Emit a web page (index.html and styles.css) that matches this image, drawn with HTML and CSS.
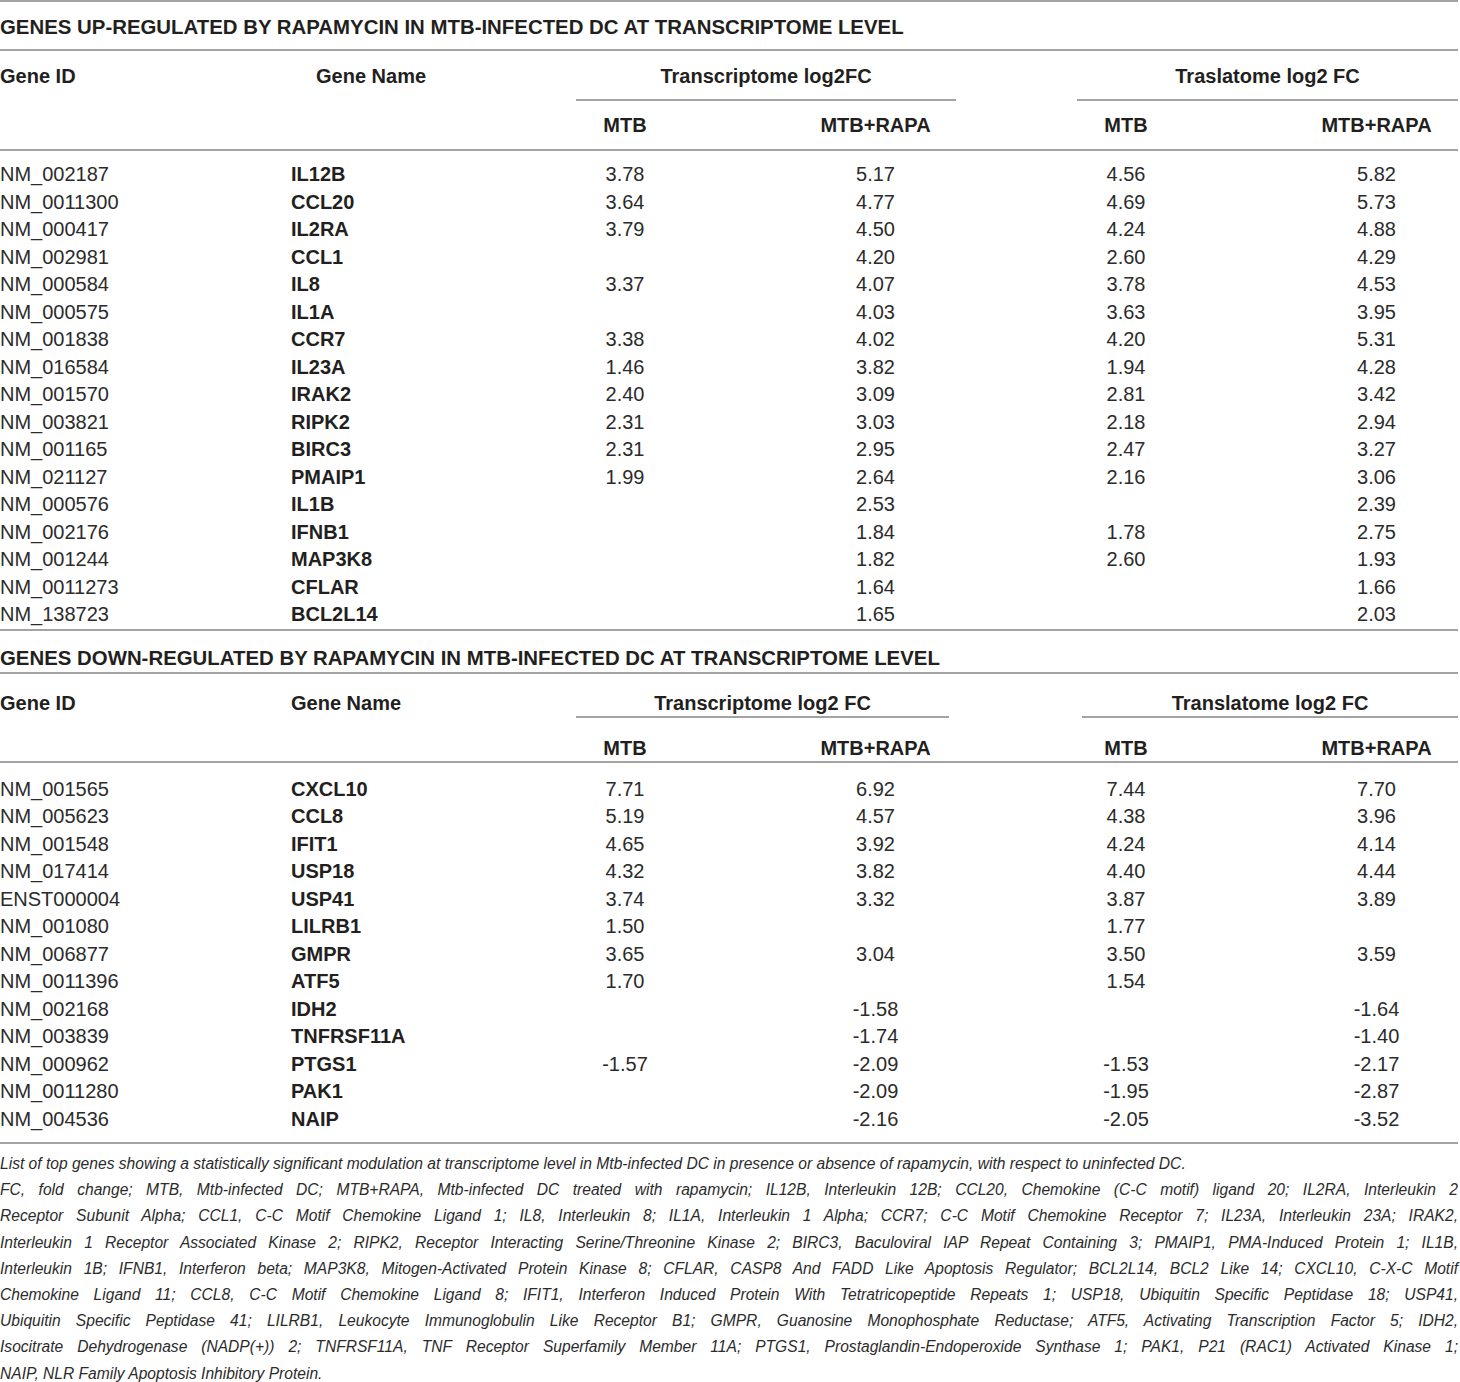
FILE: index.html
```html
<!DOCTYPE html>
<html>
<head>
<meta charset="utf-8">
<link rel="stylesheet" href="styles.css">
</head>
<body>
<div class="page">
  <section class="tbl t1">
    <div class="title">GENES UP-REGULATED BY RAPAMYCIN IN MTB-INFECTED DC AT TRANSCRIPTOME LEVEL</div>
    <div class="ghead g1">
      <div class="h">Gene ID</div>
      <div class="h gname1">Gene Name</div>
      <div class="h grp">Transcriptome log2FC</div>
      <div></div>
      <div class="h grp">Traslatome log2 FC</div>
    </div>
    <div class="shead cols">
      <div></div><div></div>
      <div class="h c">MTB</div>
      <div class="h c">MTB+RAPA</div>
      <div class="h c">MTB</div>
      <div></div>
      <div class="h c">MTB+RAPA</div>
    </div>
    <div class="body">
      <div class="row cols"><div>NM_002187</div><div class="b">IL12B</div><div class="c">3.78</div><div class="c">5.17</div><div class="c">4.56</div><div></div><div class="c">5.82</div></div>
      <div class="row cols"><div>NM_0011300</div><div class="b">CCL20</div><div class="c">3.64</div><div class="c">4.77</div><div class="c">4.69</div><div></div><div class="c">5.73</div></div>
      <div class="row cols"><div>NM_000417</div><div class="b">IL2RA</div><div class="c">3.79</div><div class="c">4.50</div><div class="c">4.24</div><div></div><div class="c">4.88</div></div>
      <div class="row cols"><div>NM_002981</div><div class="b">CCL1</div><div class="c"></div><div class="c">4.20</div><div class="c">2.60</div><div></div><div class="c">4.29</div></div>
      <div class="row cols"><div>NM_000584</div><div class="b">IL8</div><div class="c">3.37</div><div class="c">4.07</div><div class="c">3.78</div><div></div><div class="c">4.53</div></div>
      <div class="row cols"><div>NM_000575</div><div class="b">IL1A</div><div class="c"></div><div class="c">4.03</div><div class="c">3.63</div><div></div><div class="c">3.95</div></div>
      <div class="row cols"><div>NM_001838</div><div class="b">CCR7</div><div class="c">3.38</div><div class="c">4.02</div><div class="c">4.20</div><div></div><div class="c">5.31</div></div>
      <div class="row cols"><div>NM_016584</div><div class="b">IL23A</div><div class="c">1.46</div><div class="c">3.82</div><div class="c">1.94</div><div></div><div class="c">4.28</div></div>
      <div class="row cols"><div>NM_001570</div><div class="b">IRAK2</div><div class="c">2.40</div><div class="c">3.09</div><div class="c">2.81</div><div></div><div class="c">3.42</div></div>
      <div class="row cols"><div>NM_003821</div><div class="b">RIPK2</div><div class="c">2.31</div><div class="c">3.03</div><div class="c">2.18</div><div></div><div class="c">2.94</div></div>
      <div class="row cols"><div>NM_001165</div><div class="b">BIRC3</div><div class="c">2.31</div><div class="c">2.95</div><div class="c">2.47</div><div></div><div class="c">3.27</div></div>
      <div class="row cols"><div>NM_021127</div><div class="b">PMAIP1</div><div class="c">1.99</div><div class="c">2.64</div><div class="c">2.16</div><div></div><div class="c">3.06</div></div>
      <div class="row cols"><div>NM_000576</div><div class="b">IL1B</div><div class="c"></div><div class="c">2.53</div><div class="c"></div><div></div><div class="c">2.39</div></div>
      <div class="row cols"><div>NM_002176</div><div class="b">IFNB1</div><div class="c"></div><div class="c">1.84</div><div class="c">1.78</div><div></div><div class="c">2.75</div></div>
      <div class="row cols"><div>NM_001244</div><div class="b">MAP3K8</div><div class="c"></div><div class="c">1.82</div><div class="c">2.60</div><div></div><div class="c">1.93</div></div>
      <div class="row cols"><div>NM_0011273</div><div class="b">CFLAR</div><div class="c"></div><div class="c">1.64</div><div class="c"></div><div></div><div class="c">1.66</div></div>
      <div class="row cols"><div>NM_138723</div><div class="b">BCL2L14</div><div class="c"></div><div class="c">1.65</div><div class="c"></div><div></div><div class="c">2.03</div></div>
    </div>
  </section>

  <section class="tbl t2">
    <div class="title">GENES DOWN-REGULATED BY RAPAMYCIN IN MTB-INFECTED DC AT TRANSCRIPTOME LEVEL</div>
    <div class="ghead g2">
      <div class="h">Gene ID</div>
      <div class="h">Gene Name</div>
      <div class="h grp">Transcriptome log2 FC</div>
      <div></div>
      <div class="h grp">Translatome log2 FC</div>
    </div>
    <div class="shead cols">
      <div></div><div></div>
      <div class="h c">MTB</div>
      <div class="h c">MTB+RAPA</div>
      <div class="h c">MTB</div>
      <div></div>
      <div class="h c">MTB+RAPA</div>
    </div>
    <div class="body">
      <div class="row cols"><div>NM_001565</div><div class="b">CXCL10</div><div class="c">7.71</div><div class="c">6.92</div><div class="c">7.44</div><div></div><div class="c">7.70</div></div>
      <div class="row cols"><div>NM_005623</div><div class="b">CCL8</div><div class="c">5.19</div><div class="c">4.57</div><div class="c">4.38</div><div></div><div class="c">3.96</div></div>
      <div class="row cols"><div>NM_001548</div><div class="b">IFIT1</div><div class="c">4.65</div><div class="c">3.92</div><div class="c">4.24</div><div></div><div class="c">4.14</div></div>
      <div class="row cols"><div>NM_017414</div><div class="b">USP18</div><div class="c">4.32</div><div class="c">3.82</div><div class="c">4.40</div><div></div><div class="c">4.44</div></div>
      <div class="row cols"><div>ENST000004</div><div class="b">USP41</div><div class="c">3.74</div><div class="c">3.32</div><div class="c">3.87</div><div></div><div class="c">3.89</div></div>
      <div class="row cols"><div>NM_001080</div><div class="b">LILRB1</div><div class="c">1.50</div><div class="c"></div><div class="c">1.77</div><div></div><div class="c"></div></div>
      <div class="row cols"><div>NM_006877</div><div class="b">GMPR</div><div class="c">3.65</div><div class="c">3.04</div><div class="c">3.50</div><div></div><div class="c">3.59</div></div>
      <div class="row cols"><div>NM_0011396</div><div class="b">ATF5</div><div class="c">1.70</div><div class="c"></div><div class="c">1.54</div><div></div><div class="c"></div></div>
      <div class="row cols"><div>NM_002168</div><div class="b">IDH2</div><div class="c"></div><div class="c">-1.58</div><div class="c"></div><div></div><div class="c">-1.64</div></div>
      <div class="row cols"><div>NM_003839</div><div class="b">TNFRSF11A</div><div class="c"></div><div class="c">-1.74</div><div class="c"></div><div></div><div class="c">-1.40</div></div>
      <div class="row cols"><div>NM_000962</div><div class="b">PTGS1</div><div class="c">-1.57</div><div class="c">-2.09</div><div class="c">-1.53</div><div></div><div class="c">-2.17</div></div>
      <div class="row cols"><div>NM_0011280</div><div class="b">PAK1</div><div class="c"></div><div class="c">-2.09</div><div class="c">-1.95</div><div></div><div class="c">-2.87</div></div>
      <div class="row cols"><div>NM_004536</div><div class="b">NAIP</div><div class="c"></div><div class="c">-2.16</div><div class="c">-2.05</div><div></div><div class="c">-3.52</div></div>
    </div>
  </section>

  <footer class="notes">
    <p class="first">List of top genes showing a statistically significant modulation at transcriptome level in Mtb-infected DC in presence or absence of rapamycin, with respect to uninfected DC.</p>
    <p class="j">FC, fold change; MTB, Mtb-infected DC; MTB+RAPA, Mtb-infected DC treated with rapamycin; IL12B, Interleukin 12B; CCL20, Chemokine (C-C motif) ligand 20; IL2RA, Interleukin 2</p>
    <p class="j">Receptor Subunit Alpha; CCL1, C-C Motif Chemokine Ligand 1; IL8, Interleukin 8; IL1A, Interleukin 1 Alpha; CCR7; C-C Motif Chemokine Receptor 7; IL23A, Interleukin 23A; IRAK2,</p>
    <p class="j">Interleukin 1 Receptor Associated Kinase 2; RIPK2, Receptor Interacting Serine/Threonine Kinase 2; BIRC3, Baculoviral IAP Repeat Containing 3; PMAIP1, PMA-Induced Protein 1; IL1B,</p>
    <p class="j">Interleukin 1B; IFNB1, Interferon beta; MAP3K8, Mitogen-Activated Protein Kinase 8; CFLAR, CASP8 And FADD Like Apoptosis Regulator; BCL2L14, BCL2 Like 14; CXCL10, C-X-C Motif</p>
    <p class="j">Chemokine Ligand 11; CCL8, C-C Motif Chemokine Ligand 8; IFIT1, Interferon Induced Protein With Tetratricopeptide Repeats 1; USP18, Ubiquitin Specific Peptidase 18; USP41,</p>
    <p class="j">Ubiquitin Specific Peptidase 41; LILRB1, Leukocyte Immunoglobulin Like Receptor B1; GMPR, Guanosine Monophosphate Reductase; ATF5, Activating Transcription Factor 5; IDH2,</p>
    <p class="j">Isocitrate Dehydrogenase (NADP(+)) 2; TNFRSF11A, TNF Receptor Superfamily Member 11A; PTGS1, Prostaglandin-Endoperoxide Synthase 1; PAK1, P21 (RAC1) Activated Kinase 1;</p>
    <p>NAIP, NLR Family Apoptosis Inhibitory Protein.</p>
  </footer>
</div>
</body>
</html>
```

FILE: styles.css
```css
html, body {
  margin: 0;
  padding: 0;
  background: #ffffff;
}
body {
  font-family: "Liberation Sans", Arial, Helvetica, sans-serif;
  color: #231f20;
}
.page {
  width: 1458px;
}
.tbl {
  font-size: 20px;
  line-height: 20px;
}
.title {
  font-weight: bold;
  font-size: 20.4px;
  border-bottom: 2px solid #a3a3a3;
}
.t1 .title {
  border-top: 2px solid #a3a3a3;
  padding: 15px 0 12px;
}
.t2 .title {
  padding: 17px 0 4px;
}
.h {
  font-weight: bold;
}
.ghead {
  display: grid;
}
.g1 {
  grid-template-columns: 291px 285px 380px 121px 381px;
}
.g2 {
  grid-template-columns: 291px 285px 373px 133px 376px;
}
.gname1 {
  padding-left: 25px;
}
.grp {
  text-align: center;
  border-bottom: 2px solid #a3a3a3;
}
.t1 .ghead > div {
  padding-top: 15px;
}
.t1 .grp {
  padding-bottom: 13px;
}
.t2 .ghead > div {
  padding-top: 19px;
}
.t2 .grp {
  padding-bottom: 3px;
}
.cols {
  display: grid;
  grid-template-columns: 291px 285px 98px 403px 98px 120px 163px;
}
.c {
  text-align: center;
}
.shead {
  border-bottom: 2px solid #a3a3a3;
}
.t1 .shead {
  padding: 14px 0 14px;
}
.t2 .shead {
  padding: 20px 0 3px;
}
.body {
  border-bottom: 2px solid #a3a3a3;
}
.t1 .body {
  padding: 10px 0 0;
}
.t2 .body {
  padding: 13px 0 9px;
}
.row {
  height: 27.5px;
  line-height: 27.5px;
  color: #2b2b2b;
}
.b {
  font-weight: bold;
  color: #231f20;
}
.notes {
  padding-top: 7px;
  font-size: 15.6px;
  line-height: 26.2px;
  font-style: italic;
  color: #2b2b2b;
}
.notes p {
  margin: 0;
}
.notes .j {
  text-align: justify;
  text-align-last: justify;
}
```
